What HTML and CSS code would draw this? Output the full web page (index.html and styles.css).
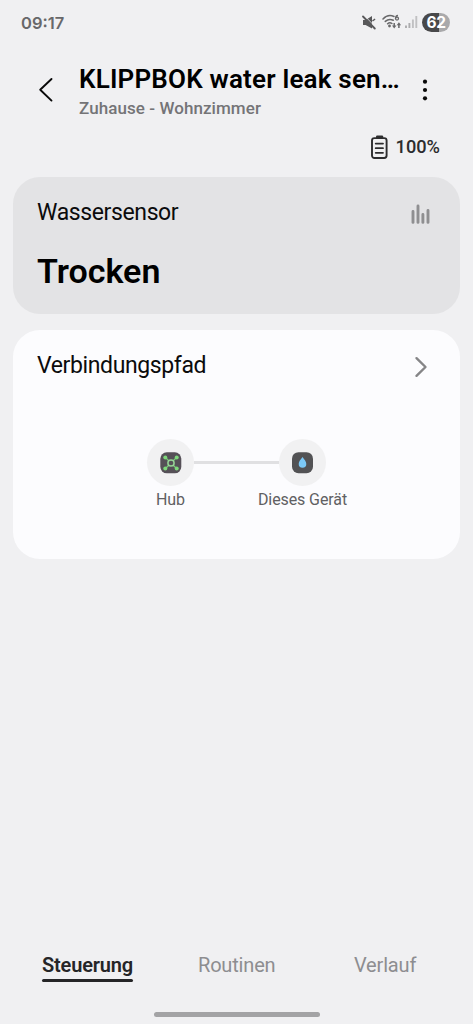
FILE: index.html
```html
<!DOCTYPE html>
<html lang="de">
<head>
<meta charset="utf-8">
<meta name="viewport" content="width=device-width, initial-scale=1">
<title>KLIPPBOK water leak sensor</title>
<link rel="stylesheet" href="styles.css">
</head>
<body>
<div class="screen">
  <div class="status-bar">
    <span class="clock">09:17</span>
    <div class="status-icons">
      <svg class="mute" width="14" height="15" viewBox="0 0 14 15">
        <path d="M1 5h2.600L10 1v12.500L3.600 10H1z" fill="#58585a"/>
        <path d="M2.200 .4l12 12.400" stroke="#f0f0f2" stroke-width=".8"/>
        <path d="M1 1.500l11.800 12" stroke="#58585a" stroke-width="1.800" stroke-linecap="round"/>
        <path d="M10.500 6l2.600-2" stroke="#58585a" stroke-width="1.400"/>
      </svg>
      <svg class="wifi" width="20" height="16" viewBox="0 0 20 16">
        <g fill="none" stroke="#68686a" stroke-width="1.5" stroke-linecap="round">
          <path d="M1 5C4 1.8 8.500 1 12 2.500M3.300 7.400c2.200-2 5.200-2.500 8-1.200M5.600 9.700c1.300-1.100 3-1.200 4.300-.2"/>
        </g>
        <circle cx="7.500" cy="12" r="1.400" fill="#68686a"/>
        <path d="M16 1.500c-1.700.2-2.500 1.300-2.500 2.900" fill="none" stroke="#68686a" stroke-width="1.300"/>
        <circle cx="15" cy="4.600" r="1.500" fill="none" stroke="#68686a" stroke-width="1.300"/>
        <path d="M12.200 9v3.800M16.900 14v-4" stroke="#68686a" stroke-width="1.500"/>
        <path d="M10 11.500h4.400l-2.200 3zM14.700 11.200h4.400l-2.200-3z" fill="#68686a"/>
      </svg>
      <svg class="signal" width="13" height="14" viewBox="0 0 13 14">
        <path d="M1 10.500V13M4.400 8v5" stroke="#acacae" stroke-width="1.900"/>
        <path d="M7.900 4.500V13M11.300 1v12" stroke="#c0c0c2" stroke-width="1.900"/>
      </svg>
      <span class="phone-battery">62</span>
    </div>
  </div>

  <header class="header">
    <svg class="back" width="16" height="26" viewBox="0 0 16 26">
      <path d="M13.500 2L2.200 12.700 13.500 23.600" fill="none" stroke="#090909" stroke-width="1.900" stroke-linecap="round" stroke-linejoin="round"/>
    </svg>
    <div class="heading">
      <h1 class="title">KLIPPBOK water leak sen…</h1>
      <div class="location">Zuhause - Wohnzimmer</div>
    </div>
    <svg class="more" width="6" height="22" viewBox="0 0 6 22">
      <g fill="#090909"><circle cx="3" cy="2.700" r="2.100"/><circle cx="3" cy="11" r="2.100"/><circle cx="3" cy="19.300" r="2.100"/></g>
    </svg>
  </header>

  <div class="battery-row">
    <svg width="18" height="25" viewBox="0 0 18 25">
      <path d="M5 3V1.600Q5 .4 6.200.4h4.800q1.200 0 1.200 1.200V3z" fill="#2c2c2e"/>
      <rect x="1" y="3.100" width="14.600" height="19.900" rx="2.400" fill="none" stroke="#2c2c2e" stroke-width="1.900"/>
      <path d="M4.700 8.600h7.300M4.700 13.200h7.300M4.700 17.800h7.300" stroke="#2c2c2e" stroke-width="1.800" stroke-linecap="round"/>
    </svg>
    <span class="battery-level">100%</span>
  </div>

  <main class="cards">
    <section class="card sensor">
      <div class="card-head">
        <h2 class="card-title">Wassersensor</h2>
        <svg class="bars" width="20" height="22" viewBox="0 0 20 22">
          <path d="M2 7.500v10.900M7 1.900v16.500M11.900 10.500v7.900M17 6.500v11.900" stroke="#8f8f91" stroke-width="2.900" stroke-linecap="round"/>
        </svg>
      </div>
      <div class="state">Trocken</div>
    </section>

    <section class="card path">
      <div class="card-head">
        <h2 class="card-title">Verbindungspfad</h2>
        <svg class="chevron" width="14" height="22" viewBox="0 0 14 22">
          <path d="M2.500 2.200l9 8.800-9 8.800" fill="none" stroke="#858587" stroke-width="2.400" stroke-linecap="round" stroke-linejoin="round"/>
        </svg>
      </div>
      <div class="route">
        <div class="node">
          <div class="node-icon">
            <svg width="22" height="22" viewBox="0 0 22 22">
              <rect x=".3" y=".3" width="21" height="21" rx="6.500" fill="#555057"/>
              <path d="M5.500 5.500l11 11M16.500 5.500l-11 11" stroke="#77c978" stroke-width="1.300"/>
              <circle cx="11" cy="11" r="3.100" fill="#555057" stroke="#96d596" stroke-width="1.500"/>
              <g fill="#7ed87b"><circle cx="5.300" cy="5.500" r="2"/><circle cx="16.700" cy="5.500" r="2"/><circle cx="5.300" cy="16.500" r="2"/><circle cx="16.700" cy="16.500" r="2"/></g>
            </svg>
          </div>
          <div class="node-label">Hub</div>
        </div>
        <div class="link"></div>
        <div class="node">
          <div class="node-icon">
            <svg width="22" height="22" viewBox="0 0 22 22">
              <rect x="0" y=".2" width="21" height="21" rx="6.500" fill="#525254"/>
              <path d="M10.500 5c2 2.700 3.800 4.600 3.800 7a3.800 3.800 0 0 1-7.600 0c0-2.400 1.800-4.300 3.800-7z" fill="#7bc8f6"/>
            </svg>
          </div>
          <div class="node-label">Dieses Gerät</div>
        </div>
      </div>
    </section>
  </main>

  <nav class="tabs">
    <span class="tab active">Steuerung</span>
    <span class="tab">Routinen</span>
    <span class="tab">Verlauf</span>
  </nav>
  <div class="home-indicator"></div>
</div>
</body>
</html>
```
FILE: styles.css
```css
* { box-sizing: border-box; }
body {
  margin: 0;
  background: #f0f0f2;
  font-family: Roboto, "Noto Sans", sans-serif;
  color: #0b0b0c;
}
h1, h2 { margin: 0; }
svg { display: block; flex: none; }
.screen {
  height: 1024px;
  display: flex;
  flex-direction: column;
  overflow: hidden;
}
.status-bar {
  height: 44px;
  padding: 0 23px 0 21px;
  display: flex;
  align-items: center;
  justify-content: space-between;
}
.clock {
  padding-top: 1px;
  font: 600 16.5px/20px Inter, sans-serif;
  color: #68686a;
}
.status-icons { display: flex; align-items: center; }
.wifi { margin-left: 6px; }
.signal { margin-left: 3px; }
.phone-battery {
  width: 28px;
  height: 19px;
  margin-left: 4px;
  border-radius: 10px;
  background: linear-gradient(90deg, #48484a 62%, #a9a9ab 62%);
  color: #fff;
  font: 700 15.5px/19px Inter, sans-serif;
  letter-spacing: -0.5px;
  text-align: center;
}
.header {
  height: 86px;
  padding: 20px 45px 0 38px;
  display: flex;
}
.back { margin-top: 13px; }
.heading { flex: 1; margin-left: 25px; }
.title {
  font-size: 26px;
  line-height: 30px;
  font-weight: 600;
  letter-spacing: 0.2px;
  color: #000;
  white-space: nowrap;
}
.location {
  margin-top: 4px;
  font-size: 17px;
  line-height: 20px;
  font-weight: 500;
  letter-spacing: 0.07px;
  color: #747477;
}
.more { margin-top: 15px; }
.battery-row {
  height: 47px;
  padding: 5px 33px 0 0;
  display: flex;
  justify-content: flex-end;
  gap: 7px;
}
.battery-level {
  font-size: 18.2px;
  line-height: 24px;
  font-weight: 500;
  color: #2c2c2e;
}
.cards {
  padding: 0 13px;
  display: grid;
  gap: 16px;
}
.card { border-radius: 27px; padding: 0 29px 0 24px; }
.sensor { height: 137px; background: #e3e3e5; padding-top: 21px; }
.path { height: 229px; background: #fcfcfe; padding-top: 21px; }
.card-head {
  display: flex;
  justify-content: space-between;
  align-items: center;
  height: 30px;
}
.card-title {
  font-size: 23px;
  line-height: 30px;
  font-weight: 400;
  letter-spacing: -0.38px;
}
.bars { margin-top: 4px; }
.chevron { margin: 2px 3px 0 0; }
.state {
  margin-top: 23px;
  font-size: 34px;
  line-height: 40px;
  font-weight: 600;
  color: #000;
}
.route {
  margin: 58px 0 0 110px;
  display: flex;
}
.node {
  width: 47px;
  display: flex;
  flex-direction: column;
  align-items: center;
}
.node-icon {
  width: 47px;
  height: 47px;
  border-radius: 50%;
  background: #f1f1f2;
  display: grid;
  place-items: center;
}
.node-label {
  margin-top: 4px;
  font-size: 16px;
  line-height: 20px;
  letter-spacing: -0.1px;
  color: #606062;
  white-space: nowrap;
}
.link {
  width: 85px;
  height: 3px;
  margin-top: 22px;
  background: #e0e0e2;
}
.tabs {
  margin-top: auto;
  height: 60px;
  padding: 0 56px 0 42px;
  display: grid;
  grid-template-columns: 156px 156px auto;
  align-items: start;
  justify-items: start;
}
.tab {
  font-size: 20px;
  line-height: 26px;
  letter-spacing: -0.18px;
  color: #8d8d90;
}
.tab.active {
  color: #252527;
  font-weight: 600;
}
.tab.active::after {
  content: "";
  display: block;
  height: 3px;
  margin-top: 1px;
  border-radius: 2px;
  background: #252527;
}
.home-indicator {
  width: 166px;
  height: 5px;
  margin: 0 0 7px 154px;
  border-radius: 3px;
  background: #a3a3a5;
}
```
